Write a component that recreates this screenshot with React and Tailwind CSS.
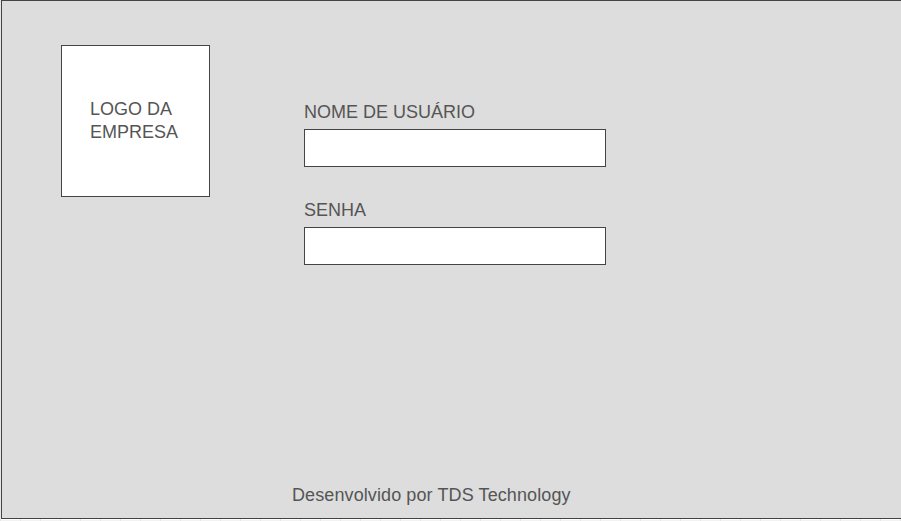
import React from 'react'

const App = () => {
  return (
    <div className="h-[521px] w-full overflow-hidden bg-white bg-[linear-gradient(to_right,#e6e6e6_1px,transparent_1px),linear-gradient(to_bottom,#f2f2f2_1px,transparent_1px)] bg-[size:20px_20px] font-['Liberation_Sans',Arial,sans-serif] text-[#555555]">
      <div className="ml-[1px] flex h-[519px] w-[920px] flex-col border border-[#444444] bg-[#dddddd]">
        {/* topo: logo + formulario */}
        <div className="flex items-start pl-[59px] pt-[44px]">
          <div className="flex h-[152px] w-[149px] shrink-0 items-center justify-center border border-[#444444] bg-white pr-[3px]">
            <p className="text-[18px] leading-[23px]">
              LOGO DA
              <br />
              EMPRESA
            </p>
          </div>

          <div className="ml-[94px] mt-[56px] flex flex-col">
            <label className="text-[18px] leading-[22px]">NOME DE USUÁRIO</label>
            <input
              type="text"
              className="mt-[6px] h-[38px] w-[302px] border border-[#444444] bg-white outline-none"
            />

            <label className="mt-[32px] text-[18px] leading-[22px]">SENHA</label>
            <input
              type="password"
              className="mt-[6px] h-[38px] w-[302px] border border-[#444444] bg-white outline-none"
            />
          </div>
        </div>

        <div className="mt-auto pb-[12px] pl-[290px] text-[18px] leading-[22px] tracking-[0.1px]">
          Desenvolvido por TDS Technology
        </div>
      </div>
    </div>
  )
}

export default App
